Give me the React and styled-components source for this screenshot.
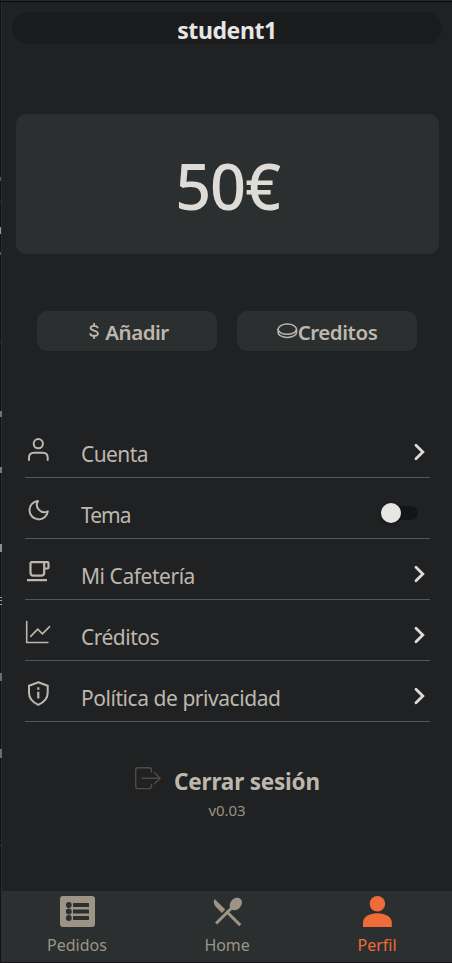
import React from "react";
import styled, { createGlobalStyle } from "styled-components";

const Global = createGlobalStyle`
  * { box-sizing: border-box; }
  body { margin: 0; background: #202123; }
  button { font: inherit; border: 0; padding: 0; margin: 0; background: none; }
`;

const Screen = styled.div`
  width: 452px;
  height: 963px;
  display: flex;
  flex-direction: column;
  position: relative;
  background: #202123;
  border-left: 1px solid #121318;
  border-bottom: 1px solid #131318;
  color: #beb7ad;
  font-family: "Noto Sans", "Open Sans", sans-serif;
`;

const TopEdge = styled.div`
  height: 2px;
  flex: none;
  background: #08080b;
  border-top: 1px solid #292a31;
`;

const Body = styled.div`
  flex: 1;
  min-height: 0;
  display: flex;
  flex-direction: column;
  border-left: 1px solid #2b2b31;
`;

const Fragment = styled.i`
  position: absolute;
  left: -1px;
  top: ${(p) => p.$y}px;
  width: ${(p) => p.$w || 1}px;
  height: ${(p) => p.$h}px;
  background: ${(p) => p.$c || "#77777a"};
`;

const Header = styled.header`
  height: 32px;
  margin: 10px 10px 0;
  border-radius: 16px;
  background: #1a1b1d;
  display: flex;
  justify-content: center;
`;

const UserName = styled.h1`
  margin: 2px 0 0;
  font-size: 23px;
  line-height: 32px;
  font-weight: 700;
  letter-spacing: -0.4px;
  color: #e8e6e3;
`;

const Balance = styled.section`
  height: 140px;
  margin: 70px 13px 0 14px;
  border-radius: 10px;
  background: #2b2f30;
  display: flex;
  justify-content: center;
`;

const Amount = styled.span`
  margin-top: 2px;
  font-size: 63px;
  line-height: 140px;
  font-weight: 550;
  letter-spacing: -1.2px;
  color: #dfdcd7;
`;

const Actions = styled.div`
  display: flex;
  gap: 20px;
  margin: 57px 0 0 35px;
`;

const Action = styled.button`
  width: 180px;
  height: 40px;
  border-radius: 10px;
  background: #2b2f30;
  color: #beb7ad;
  display: flex;
  justify-content: center;
  align-items: center;
  font-size: 20.5px;
  font-weight: 600;
  line-height: 40px;
  padding-left: ${(p) => p.$indent || 0}px;
  letter-spacing: ${(p) => p.$track}px;
  span { margin-top: 2px; }
`;

const Menu = styled.ul`
  list-style: none;
  margin: 66px 22px 0 23px;
  padding: 0;
`;

const Item = styled.li`
  height: 61px;
  border-bottom: 1px solid #515658;
  display: flex;
  align-items: center;
`;

const ItemIcon = styled.svg`
  width: 28px;
  height: 28px;
  flex: none;
  margin-top: 4px;
`;

const ItemLabel = styled.span`
  flex: 1;
  margin: 14px 0 0 28px;
  font-size: 21px;
  line-height: 30px;
  letter-spacing: ${(p) => p.$track || 0}px;
`;

const Arrow = styled.svg`
  width: 16px;
  height: 20px;
  margin: 9px 3px 0 0;
`;

const Switch = styled.span`
  width: 37px;
  height: 20px;
  margin: 10px 12px 0 0;
  display: flex;
  align-items: center;
`;

const Track = styled.span`
  width: 34px;
  height: 14px;
  margin-left: 3px;
  border-radius: 7px;
  background: #141517;
  display: flex;
  align-items: center;
`;

const Knob = styled.span`
  width: 20px;
  height: 20px;
  margin-left: -3px;
  border-radius: 50%;
  background: #e8e6e3;
  box-shadow: 0 1px 3px rgba(0, 0, 0, 0.5);
`;

const Logout = styled.button`
  display: flex;
  align-items: center;
  align-self: center;
  margin-top: 41px;
  height: 32px;
  gap: 12px;
  color: #beb7ad;
  font-size: 22.5px;
  font-weight: 700;
  line-height: 32px;
  letter-spacing: -0.2px;
  span { margin-top: 5px; }
`;

const Version = styled.small`
  align-self: center;
  margin-top: 5px;
  font-size: 15px;
  line-height: 20px;
  letter-spacing: -0.1px;
  color: #9b9183;
`;

const Nav = styled.nav`
  height: 71px;
  margin-top: auto;
  background: #2b2f30;
  display: grid;
  grid-template-columns: repeat(3, 150px);
`;

const Tab = styled.a`
  display: flex;
  flex-direction: column;
  align-items: center;
  color: ${(p) => (p.$active ? "#ee6c39" : "#9e9485")};
  font-size: 16px;
  line-height: 20px;
  letter-spacing: ${(p) => p.$track || 0}px;
  svg { width: 40px; height: 40px; margin-bottom: 4px; }
`;

const stroke = { fill: "none", stroke: "#beb7ad", strokeWidth: 2, strokeLinecap: "round", strokeLinejoin: "round" };

const icons = {
  user: (
    <g {...stroke} strokeWidth="2">
      <circle cx="13.3" cy="8.7" r="4.6" />
      <path d="M4 25v-2.300q0-5 5-5h8.700q5 0 5 5V25" />
    </g>
  ),
  moon: <path {...stroke} d="M13 5a9.200 9.200 0 1 0 9.800 10.300A7.400 7.400 0 0 1 13 5Z" />,
  cup: (
    <g {...stroke} strokeLinecap="butt" strokeLinejoin="miter">
      <path d="M5.500 5.200h17q1 0 1 1v4.300q0 1-1 1h-3.200M5.500 5.200v10.500q0 3 3 3h7.500q3.200 0 3.200-3v-10.500M2 23.200h20" strokeWidth="2.200" />
    </g>
  ),
  chart: (
    <g {...stroke} strokeWidth="1.6" strokeLinejoin="miter">
      <path d="M1.700 3.500v21h21.200M5.700 18.400l7-7.200 4.700 4.600 7.200-7.200" />
    </g>
  ),
  shield: (
    <g {...stroke} strokeLinejoin="miter">
      <path d="m13.300 3.200 9.400 3.600v7q0 8-9.400 12Q4 21.800 4 13.800v-7Z" />
      <path d="M13.300 12.800v6.700M13.300 8.300v2.400" strokeLinecap="butt" strokeWidth="2.200" />
    </g>
  ),
};

const items = [
  { id: "user", label: "Cuenta", track: -0.6 },
  { id: "moon", label: "Tema", track: -1 },
  { id: "cup", label: "Mi Cafetería", track: -0.45 },
  { id: "chart", label: "Créditos", track: -0.5 },
  { id: "shield", label: "Política de privacidad", track: -0.45 },
];

const fragments = [
  { y: 177, h: 4, c: "#58585c" },
  { y: 201, h: 1, c: "#3a3b3f" },
  { y: 227, h: 7, c: "#96979a" },
  { y: 252, h: 3, c: "#555559" },
  { y: 342, h: 1, c: "#3a3b3f" },
  { y: 411, h: 6, w: 2, c: "#737376" },
  { y: 467, h: 6, w: 2 },
  { y: 544, h: 8, w: 2, c: "#8d8d90" },
  { y: 597, h: 1, w: 2, c: "#a0a0a3" },
  { y: 600, h: 1, w: 2, c: "#a0a0a3" },
  { y: 604, h: 1, w: 2, c: "#a0a0a3" },
  { y: 673, h: 8, w: 2, c: "#6d6e71" },
  { y: 749, h: 9, w: 2, c: "#6d6e71" },
  { y: 845, h: 1, c: "#3a3b3f" },
];

export default function App() {
  return (
    <>
      <Global />
      <Screen>
        <TopEdge />
        <Body>
          <Header><UserName>student1</UserName></Header>
          <Balance><Amount>50€</Amount></Balance>
          <Actions>
            <Action $track={-0.5} $indent={3}>
              <svg width="17" height="20" viewBox="0 0 17 20">
                <path d="M9.800 7.300C9.700 4.300 2.600 4 2.500 7c0 3.200 7.500 2 7.500 5.600 0 3.200-7.700 3.100-7.900-.2M6.100 2v3M6.100 15v3" {...stroke} strokeWidth="1.800" strokeLinecap="butt" />
              </svg>
              <span>Añadir</span>
            </Action>
            <Action $track={-0.45}>
              <svg width="21" height="20" viewBox="0 0 21 20">
                <g {...stroke} strokeWidth="1.500">
                  <ellipse cx="10.300" cy="8.200" rx="9.200" ry="5.100" />
                  <path d="M1.100 8.200v3.200c0 2.700 4 5 9.200 5s9.200-2.300 9.200-5v-3.200" />
                </g>
              </svg>
              <span>Creditos</span>
            </Action>
          </Actions>
          <Menu>
            {items.map(({ id, label, track }) => (
              <Item key={id}>
                <ItemIcon viewBox="0 0 28 28">{icons[id]}</ItemIcon>
                <ItemLabel $track={track}>{label}</ItemLabel>
                {id === "moon" ? (
                  <Switch role="switch" aria-checked="false"><Track><Knob /></Track></Switch>
                ) : (
                  <Arrow viewBox="0 0 16 20">
                    <path d="m5 3.300 6.800 6.700L5 16.700" {...stroke} stroke="#dedbd6" strokeWidth="2.800" strokeLinejoin="miter" />
                  </Arrow>
                )}
              </Item>
            ))}
          </Menu>
          <Logout>
            <svg width="28" height="26" viewBox="0 0 28 26">
              <path d="M17.500 6V4.200q0-2.400-2.400-2.400H4Q1.700 1.800 1.700 4.200v16q0 2.400 2.300 2.400h11.100q2.400 0 2.400-2.400v-1.800M8 12.200h18M20.500 6.700l5.700 5.500-5.700 5.500" {...stroke} stroke="#514b41" strokeWidth="1.400" />
            </svg>
            <span>Cerrar sesión</span>
          </Logout>
          <Version>v0.03</Version>
          <Nav>
            <Tab>
              <svg viewBox="0 0 40 40">
                <rect x="3" y="5" width="35" height="31" rx="3" fill="#9e9485" />
                <g fill="#2b2f30">
                  {[14, 20.500, 27].map((y) => (
                    <g key={y}>
                      <circle cx="11.800" cy={y} r="2.900" />
                      <rect x="16" y={y - 2} width="16" height="4" rx=".5" />
                    </g>
                  ))}
                </g>
              </svg>
              Pedidos
            </Tab>
            <Tab $track={-0.1}>
              <svg viewBox="0 0 40 40">
                <g fill="#9e9485">
                  <path d="M7.600 8 18.300 18.600 14.900 22 9 16Q5.400 12.300 7.600 8Z" />
                  <path d="m8 31.500 17-17 2.100 2.100-17 17Z" />
                  <path d="m20.300 19.200 14 13.900-2.100 2.100-14-14Z" />
                  <ellipse cx="28.800" cy="13" rx="5.400" ry="7" transform="rotate(43 28.800 13)" />
                </g>
              </svg>
              Home
            </Tab>
            <Tab $active>
              <svg viewBox="0 0 40 40">
                <g fill="#ee6c39">
                  <circle cx="20.400" cy="12.800" r="7.700" />
                  <path d="M6 36v-4.500C6 26 12.500 22.300 20.400 22.300S34.800 26 34.800 31.500V36Z" />
                </g>
              </svg>
              Perfil
            </Tab>
          </Nav>
        </Body>
        {fragments.map(({ y, h, w, c }) => <Fragment key={y} $y={y} $h={h} $w={w} $c={c} />)}
      </Screen>
    </>
  );
}
